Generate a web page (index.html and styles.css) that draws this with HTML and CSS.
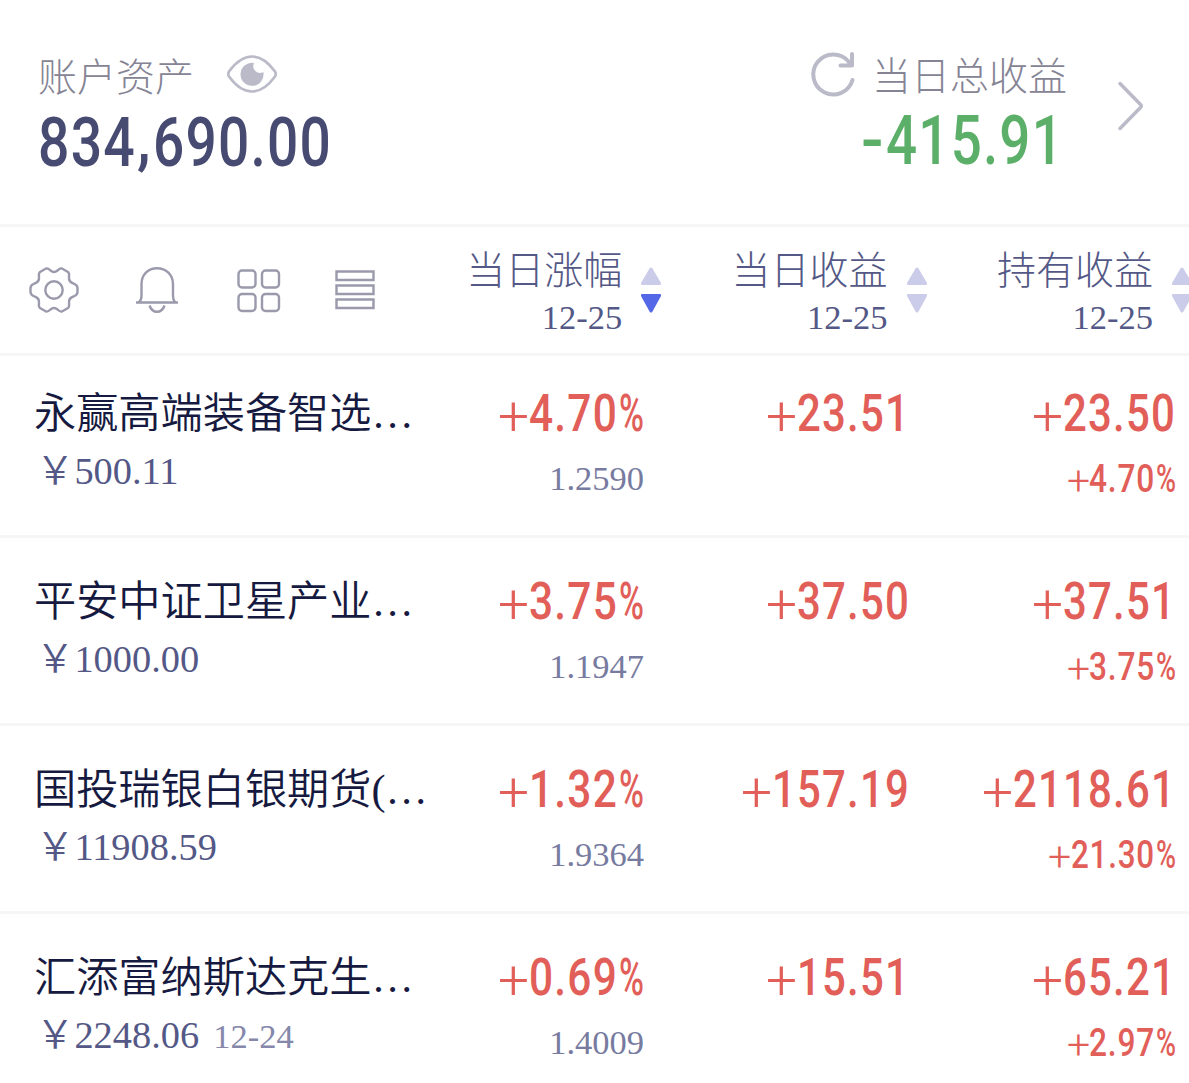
FILE: index.html
```html
<!DOCTYPE html>
<html lang="zh-CN">
<head>
<meta charset="utf-8">
<title>账户资产</title>
<link rel="stylesheet" href="styles.css">
</head>
<body>
<header class="summary">
  <div class="assets">
    <div class="label">账户资产
      <svg class="eye" width="50" height="38" viewBox="0 0 50 38"><path d="M2 16.500C10 5.500 17 1.500 25 1.500S40 5.500 48 16.500Q49.500 19 48 21.500C40 32.500 33 36.500 25 36.500S10 32.500 2 21.500Q.5 19 2 16.500Z" fill="none" stroke="#babac8" stroke-width="2.700" stroke-linejoin="round"/><path d="M27 8A11.500 11.500 0 1 0 36.300 17A6.800 6.800 0 0 1 27 8Z" fill="#babac8"/></svg>
    </div>
    <svg class="total" width="300" height="76"><g class="digits large"><text x="0" y="62" textLength="98" lengthAdjust="spacingAndGlyphs">834</text><text x="99" y="58" textLength="15" lengthAdjust="spacingAndGlyphs">,</text><text x="115" y="62" textLength="179" lengthAdjust="spacingAndGlyphs">690.00</text></g></svg>
  </div>
  <div class="today">
    <div class="label"><svg class="reload" width="46" height="46" viewBox="0 0 46 46"><g fill="none" stroke="#babac8" stroke-width="4" stroke-linecap="round" stroke-linejoin="round"><path d="M41.500 28A20 20 0 1 1 37.500 9.500L40 13"/><path d="M41 2V13.500H29.500"/></g></svg>当日总收益</div>
    <svg class="total" width="210" height="76"><g class="digits large"><text x="3" y="61" textLength="24" lengthAdjust="spacingAndGlyphs">-</text><text x="28" y="61" textLength="178" lengthAdjust="spacingAndGlyphs">415.91</text></g></svg>
  </div>
  <svg class="chevron" width="28" height="50" viewBox="0 0 28 50"><path d="M3 2.500L23.500 23.500Q25 25 23.500 26.500L3 47.500" fill="none" stroke="#babac8" stroke-width="3.500" stroke-linecap="round"/></svg>
</header>

<section class="toolbar">
  <div class="tools">
    <svg class="gear" width="50" height="48" viewBox="-25 -24 50 48"><g fill="none" stroke="#9a9aac" stroke-width="2.400"><path d="M-8-21.500Q-6-22-3.500-19.500Q0-16.500 3.500-19.500Q6-22 8-21.500L14-18Q15.500-17 15-13Q14.500-8 19.500-6.500Q23.500-5 23.500-2V2Q23.500 5 19.500 6.500Q14.500 8 15 13Q15.500 17 14 18L8 21.500Q6 22 3.500 19.500Q0 16.500-3.500 19.500Q-6 22-8 21.500L-14 18Q-15.500 17-15 13Q-14.500 8-19.500 6.500Q-23.500 5-23.500 2V-2Q-23.500-5-19.500-6.500Q-14.500-8-15-13Q-15.500-17-14-18Z"/><circle r="8.700"/></g></svg>
    <svg class="bell" width="42" height="46" viewBox="0 0 42 46"><g fill="none" stroke="#9a9aac" stroke-width="2.400"><path d="M0 35.500H42M3 35Q5.500 33 5.500 29V17C5.500 7.500 12 1.200 21 1.200S37 7.500 37 17V29Q37 33 39 35M13.500 38.500C15 43 18 44.800 21 44.800S27 43 28.500 38.500"/></g></svg>
    <svg class="tiles" width="44" height="44" viewBox="0 0 44 44"><g fill="none" stroke="#9a9aac" stroke-width="2.400"><rect x="1.500" y="1.500" width="17" height="17" rx="3.500"/><rect x="25" y="1.500" width="17" height="17" rx="3.500"/><rect x="1.500" y="25" width="17" height="17" rx="3.500"/><rect x="25" y="25" width="17" height="17" rx="3.500"/></g></svg>
    <svg class="list" width="40" height="40" viewBox="0 0 40 40"><g fill="none" stroke="#9a9aac" stroke-width="2.400"><path d="M1.500 1.500H38.500V10H1.500ZM1.500 15.500H38.500V24H1.500ZM1.500 29.500H38.500V38H1.500Z"/></g></svg>
  </div>
  <div class="col"><div>当日涨幅<small>12-25</small></div><svg class="sort desc" width="22" height="46" viewBox="0 0 22 46"><path class="up" d="M9.800 1Q11 0 12.200 1L21 16Q21.500 18 20 18H2Q.5 18 1 16Z"/><path class="down" d="M9.800 45Q11 46 12.200 45L21 29Q21.500 27 20 27H2Q.5 27 1 29Z"/></svg></div>
  <div class="col"><div>当日收益<small>12-25</small></div><svg class="sort" width="22" height="46" viewBox="0 0 22 46"><path class="up" d="M9.800 1Q11 0 12.200 1L21 16Q21.500 18 20 18H2Q.5 18 1 16Z"/><path class="down" d="M9.800 45Q11 46 12.200 45L21 29Q21.500 27 20 27H2Q.5 27 1 29Z"/></svg></div>
  <div class="col"><div>持有收益<small>12-25</small></div><svg class="sort" width="22" height="46" viewBox="0 0 22 46"><path class="up" d="M9.800 1Q11 0 12.200 1L21 16Q21.500 18 20 18H2Q.5 18 1 16Z"/><path class="down" d="M9.800 45Q11 46 12.200 45L21 29Q21.500 27 20 27H2Q.5 27 1 29Z"/></svg></div>
</section>

<main class="funds">
  <article class="fund">
    <div class="info"><h2>永赢高端装备智选…</h2><p>￥500.11</p></div>
    <div class="cell"><svg class="value" width="210" height="74"><g class="digits"><text class="plus" x="63" y="51">+</text><text x="94" y="47" textLength="89" lengthAdjust="spacingAndGlyphs">4.70</text><text class="pct" x="184" y="47" textLength="25" lengthAdjust="spacingAndGlyphs">%</text></g></svg><p>1.2590</p></div>
    <div class="cell"><svg class="value" width="210" height="74"><g class="digits"><text class="plus" x="66" y="51">+</text><text x="97" y="47" textLength="113" lengthAdjust="spacingAndGlyphs">23.51</text></g></svg></div>
    <div class="cell"><svg class="value" width="211" height="74"><g class="digits"><text class="plus" x="68" y="51">+</text><text x="99" y="47" textLength="113" lengthAdjust="spacingAndGlyphs">23.50</text></g></svg><svg class="rate" width="210" height="44"><g class="digits small"><text class="plus" x="102" y="37">+</text><text x="124" y="34" textLength="66" lengthAdjust="spacingAndGlyphs">4.70</text><text class="pct" x="191" y="34" textLength="20" lengthAdjust="spacingAndGlyphs">%</text></g></svg></div>
  </article>
  <article class="fund">
    <div class="info"><h2>平安中证卫星产业…</h2><p>￥1000.00</p></div>
    <div class="cell"><svg class="value" width="210" height="74"><g class="digits"><text class="plus" x="63" y="51">+</text><text x="94" y="47" textLength="89" lengthAdjust="spacingAndGlyphs">3.75</text><text class="pct" x="184" y="47" textLength="25" lengthAdjust="spacingAndGlyphs">%</text></g></svg><p>1.1947</p></div>
    <div class="cell"><svg class="value" width="210" height="74"><g class="digits"><text class="plus" x="66" y="51">+</text><text x="97" y="47" textLength="113" lengthAdjust="spacingAndGlyphs">37.50</text></g></svg></div>
    <div class="cell"><svg class="value" width="211" height="74"><g class="digits"><text class="plus" x="68" y="51">+</text><text x="99" y="47" textLength="113" lengthAdjust="spacingAndGlyphs">37.51</text></g></svg><svg class="rate" width="210" height="44"><g class="digits small"><text class="plus" x="102" y="37">+</text><text x="124" y="34" textLength="66" lengthAdjust="spacingAndGlyphs">3.75</text><text class="pct" x="191" y="34" textLength="20" lengthAdjust="spacingAndGlyphs">%</text></g></svg></div>
  </article>
  <article class="fund">
    <div class="info"><h2>国投瑞银白银期货(…</h2><p>￥11908.59</p></div>
    <div class="cell"><svg class="value" width="210" height="74"><g class="digits"><text class="plus" x="63" y="51">+</text><text x="94" y="47" textLength="89" lengthAdjust="spacingAndGlyphs">1.32</text><text class="pct" x="184" y="47" textLength="25" lengthAdjust="spacingAndGlyphs">%</text></g></svg><p>1.9364</p></div>
    <div class="cell"><svg class="value" width="210" height="74"><g class="digits"><text class="plus" x="41" y="51">+</text><text x="72" y="47" textLength="138" lengthAdjust="spacingAndGlyphs">157.19</text></g></svg></div>
    <div class="cell"><svg class="value" width="211" height="74"><g class="digits"><text class="plus" x="18" y="51">+</text><text x="49" y="47" textLength="163" lengthAdjust="spacingAndGlyphs">2118.61</text></g></svg><svg class="rate" width="210" height="44"><g class="digits small"><text class="plus" x="83" y="37">+</text><text x="106" y="34" textLength="84" lengthAdjust="spacingAndGlyphs">21.30</text><text class="pct" x="191" y="34" textLength="20" lengthAdjust="spacingAndGlyphs">%</text></g></svg></div>
  </article>
  <article class="fund">
    <div class="info"><h2>汇添富纳斯达克生…</h2><p>￥2248.06<span class="date">12-24</span></p></div>
    <div class="cell"><svg class="value" width="210" height="74"><g class="digits"><text class="plus" x="63" y="51">+</text><text x="94" y="47" textLength="89" lengthAdjust="spacingAndGlyphs">0.69</text><text class="pct" x="184" y="47" textLength="25" lengthAdjust="spacingAndGlyphs">%</text></g></svg><p>1.4009</p></div>
    <div class="cell"><svg class="value" width="210" height="74"><g class="digits"><text class="plus" x="66" y="51">+</text><text x="97" y="47" textLength="113" lengthAdjust="spacingAndGlyphs">15.51</text></g></svg></div>
    <div class="cell"><svg class="value" width="211" height="74"><g class="digits"><text class="plus" x="68" y="51">+</text><text x="99" y="47" textLength="113" lengthAdjust="spacingAndGlyphs">65.21</text></g></svg><svg class="rate" width="210" height="44"><g class="digits small"><text class="plus" x="102" y="37">+</text><text x="124" y="34" textLength="66" lengthAdjust="spacingAndGlyphs">2.97</text><text class="pct" x="191" y="34" textLength="20" lengthAdjust="spacingAndGlyphs">%</text></g></svg></div>
  </article>
</main>
</body>
</html>
```
FILE: styles.css
```css
* { box-sizing: border-box; }
body {
  margin: 0;
  width: 1189px;
  height: 1083px;
  overflow: hidden;
  background: #fff;
  font-family: "Liberation Serif", "Noto Sans CJK SC", serif;
  color: #545886;
}
svg { display: block; flex: none; overflow: visible; }
h2, p { margin: 0; font-weight: 350; white-space: nowrap; }

.summary {
  display: flex;
  height: 227px;
  border-bottom: 3px solid #f6f6f7;
  padding: 54px 0 0 38px;
}
.label {
  display: flex;
  height: 50px;
  line-height: 48px;
  font-size: 39px;
  font-weight: 300;
  color: #858494;
  white-space: nowrap;
}
.assets { width: 773px; }
.eye { margin: 1px 0 0 33px; }
.assets .total { fill: #474b72; }
.today { width: 258px; margin-top: -1px; }
.today .label { gap: 15px; }
.reload { margin-top: -1px; }
.today .total { fill: #5baf68; margin-left: 47px; }
.chevron { margin: 27px 0 0 48px; }

.digits { font: 500 52px Roboto, sans-serif; letter-spacing: 1.500px; }
.digits.large { font-size: 68.500px; }
.digits.small { font-size: 39.500px; letter-spacing: 1px; }
.plus { font-size: 55px; font-weight: 300; letter-spacing: 0; }
.pct { font-weight: 500; letter-spacing: 0; }
.small .plus { font-size: 41px; }

.toolbar {
  display: flex;
  height: 129px;
  border-bottom: 3px solid #f6f6f7;
  overflow: hidden;
}
.tools {
  display: flex;
  flex: none;
  width: 397px;
  padding: 39px 0 0 29px;
}
.bell { margin: 1px 0 0 57px; }
.tiles { margin: 3px 0 0 59px; }
.list { margin: 4px 0 0 54px; }
.col {
  display: flex;
  flex: none;
  justify-content: flex-end;
  width: 265.300px;
  padding-top: 20px;
  gap: 18px;
  text-align: right;
  font-size: 39px;
  line-height: 48px;
  font-weight: 300;
  white-space: nowrap;
}
.col small {
  display: block;
  margin-top: 1px;
  font-size: 34.500px;
  line-height: 42px;
  font-weight: 400;
}
.sort { margin-top: 20px; fill: #caccea; }
.desc .down { fill: #5468e7; }

.fund {
  display: grid;
  grid-template-columns: 411px 200px 265px 265px;
  height: 188px;
  padding: 34px 0 0 34px;
  border-bottom: 3px solid #f6f6f7;
}
.fund:first-child { height: 182px; padding-top: 28px; }
.fund:last-child { border-bottom: 0; }
.info h2 { font-size: 42.200px; line-height: 60px; color: #161a40; }
.info p { margin-top: 5px; padding-left: 2px; font-size: 38.400px; line-height: 44px; }
.date { margin-left: 14px; font-size: 34.500px; color: #8588aa; }
.cell {
  display: flex;
  flex-direction: column;
  align-items: flex-end;
  fill: #e15e59;
}
.cell p { padding-right: 1px; font-size: 34.500px; line-height: 40px; color: #777b9f; }
```
